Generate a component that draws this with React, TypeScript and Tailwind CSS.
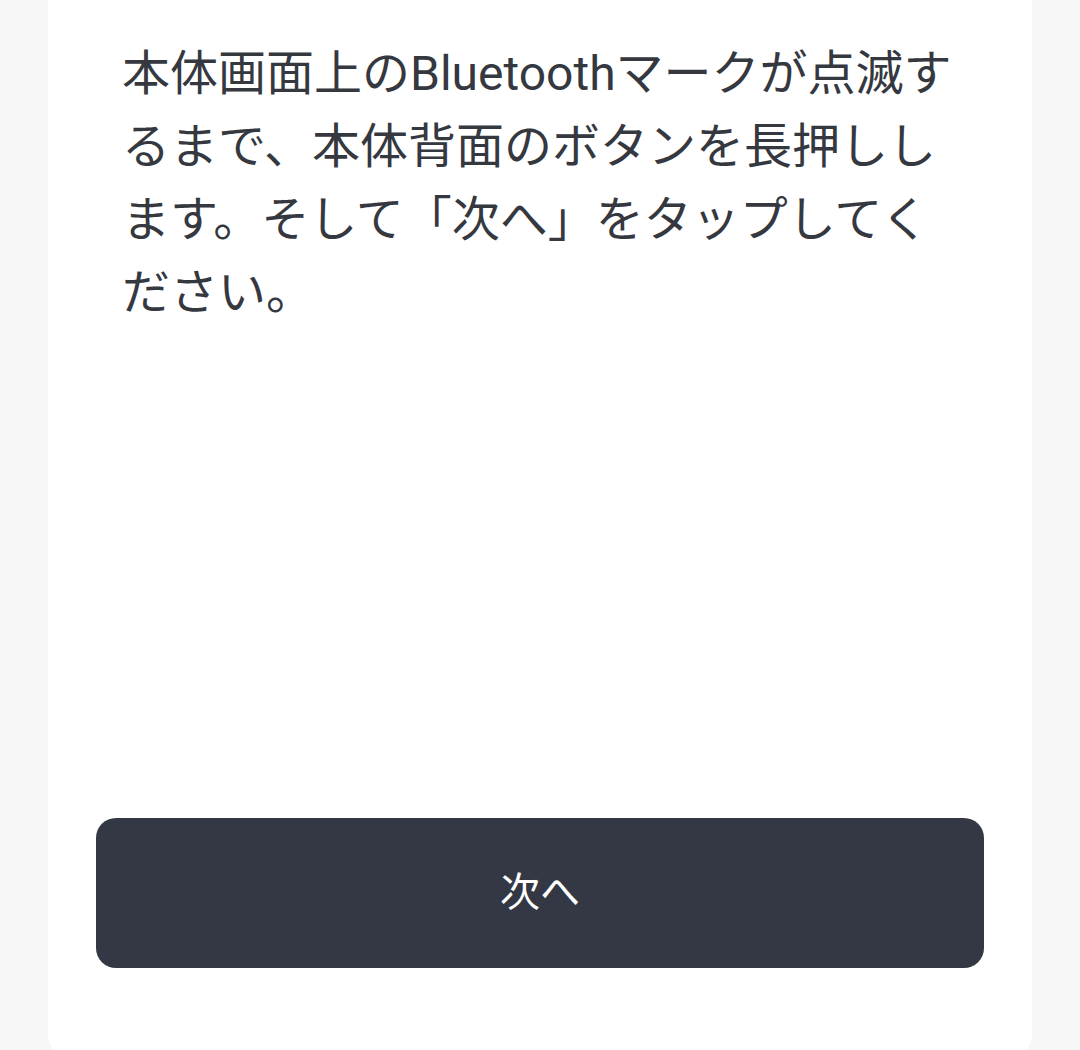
export default function App() {
  return (
    <div
      className="h-[1050px] w-full bg-[#f7f7f7] px-[48px] overflow-hidden"
      style={{ fontFamily: 'Roboto, "Noto Sans CJK JP", "Noto Sans", sans-serif' }}
    >
      <div className="flex h-[1058px] flex-col rounded-b-[24px] bg-white">
        {/* Instruction text */}
        <p className="pl-[74px] pr-[74px] pt-[37px] text-[48px] leading-[73px] text-[#35383f]">
          本体画面上のBluetoothマークが点滅するまで、本体背面のボタンを長押しします。そして「次へ」をタップしてください。
        </p>

        <div className="flex-1" />

        {/* Next button */}
        <div className="px-[48px] pb-[90px]">
          <button className="flex h-[150px] w-full items-center justify-center rounded-[20px] bg-[#343844] text-[40px] text-white">
            次へ
          </button>
        </div>
      </div>
    </div>
  );
}
